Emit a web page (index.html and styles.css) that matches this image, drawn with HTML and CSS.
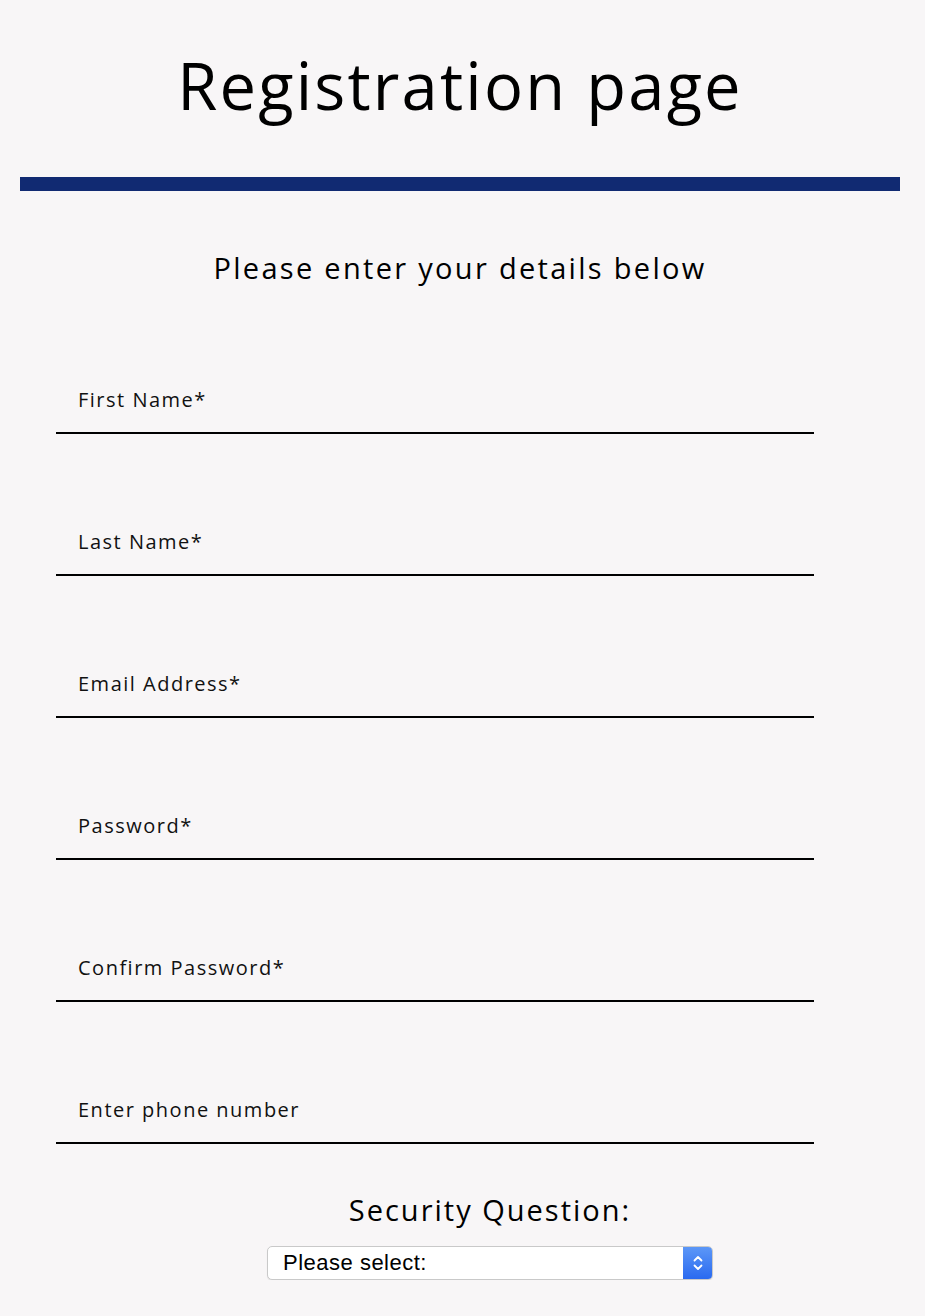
FILE: index.html
```html
<!DOCTYPE html>
<html lang="en">
<head>
<meta charset="utf-8">
<title>Registration page</title>
<link rel="stylesheet" href="styles.css">
</head>
<body>
<header class="header">
  <h1 class="title">Registration page</h1>
  <div class="bar"></div>
</header>
<main class="main">
  <h2 class="subtitle">Please enter your details below</h2>
  <form class="form">
    <div class="field"><input class="input" type="text" placeholder="First Name*"></div>
    <div class="field"><input class="input" type="text" placeholder="Last Name*"></div>
    <div class="field"><input class="input" type="email" placeholder="Email Address*"></div>
    <div class="field"><input class="input" type="password" placeholder="Password*"></div>
    <div class="field"><input class="input" type="password" placeholder="Confirm Password*"></div>
    <div class="field"><input class="input" type="tel" placeholder="Enter phone number"></div>
    <div class="security">
      <label class="security-label">Security Question:</label>
      <div class="select">
        <span class="select-text">Please select:</span>
        <span class="select-btn">
          <svg width="12" height="20" viewBox="0 0 12 20" fill="none" stroke="#fff" stroke-width="1.8" stroke-linecap="round" stroke-linejoin="round"><path d="M2.5 7.5 L6 4 L9.5 7.5"/><path d="M2.5 12.5 L6 16 L9.5 12.5"/></svg>
        </span>
      </div>
    </div>
  </form>
</main>
</body>
</html>
```

FILE: styles.css
```css
* { box-sizing: border-box; }
html, body { background: #f8f6f7; }
body {
  margin: 0;
  padding: 0 25px 0 20px;
  font-family: "Open Sans", "Liberation Sans", sans-serif;
  color: #000;
}
.header { padding-top: 40px; }
.title {
  margin: 0;
  text-align: center;
  font-weight: 400;
  font-size: 65px;
  line-height: 90px;
  letter-spacing: 2.2px;
}
.bar {
  margin-top: 47px;
  height: 14px;
  background: #112a72;
}
.main { padding-top: 52px; }
.subtitle {
  margin: 0;
  text-align: center;
  font-weight: 400;
  font-size: 29px;
  line-height: 50px;
  letter-spacing: 2.3px;
}
.form {
  width: 758px;
  margin-left: 36px;
}
.field { padding-top: 92px; }
.field:first-child { padding-top: 91px; }
.input {
  display: block;
  width: 100%;
  height: 50px;
  padding: 0 22px 17px;
  border: 0;
  border-bottom: 2px solid #000;
  background: transparent;
  font-family: inherit;
  font-size: 20px;
  letter-spacing: 1.5px;
  color: #000;
  outline: none;
}
.input::placeholder { color: #111; opacity: 1; }
.security {
  display: flex;
  flex-direction: column;
  align-items: center;
  margin-left: 110px;
  padding-top: 46px;
}
.security-label {
  font-size: 29px;
  line-height: 40px;
  letter-spacing: 2px;
}
.select {
  margin-top: 16px;
  width: 446px;
  height: 34px;
  display: flex;
  align-items: stretch;
  background: #fff;
  border: 1px solid #c9c9c9;
  border-radius: 5px;
  overflow: hidden;
  box-shadow: 0 1px 1px rgba(0,0,0,0.08);
}
.select-text {
  flex: 1;
  padding-left: 15px;
  font-family: "Liberation Sans", Arial, sans-serif;
  font-size: 22px;
  letter-spacing: 0.5px;
  line-height: 32px;
}
.select-btn {
  width: 29px;
  display: flex;
  align-items: center;
  justify-content: center;
  background: linear-gradient(#5c97f7, #2a6af0);
}
```
